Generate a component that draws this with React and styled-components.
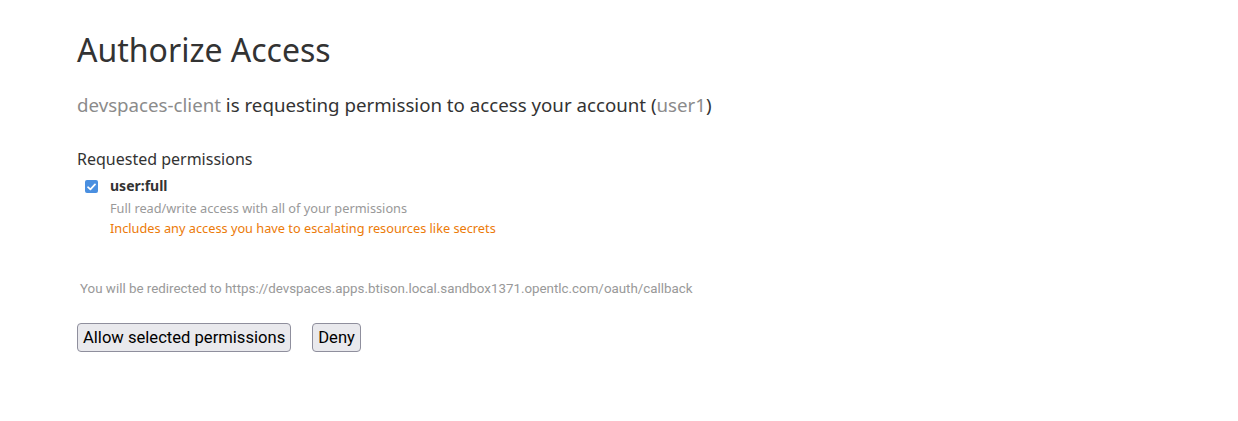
import React, { useState } from "react";
import styled, { createGlobalStyle } from "styled-components";

const GlobalStyle = createGlobalStyle`
body {
  margin: 0;
  background: #fff;
  font-family: "Noto Sans", "Open Sans", sans-serif;
  color: #333;
}
`;

const Page = styled.div`
  padding: 28px 77px;
  display: flex;
  flex-direction: column;
`;

const Title = styled.h1`
  margin: 0;
  font-size: 32px;
  font-weight: 400;
  line-height: 44px;
  color: #333;
`;

const Lead = styled.p`
  margin: 20px 0 0;
  font-size: 18.7px;
  line-height: 26px;
  color: #333;
`;

const Muted = styled.span`
  color: #8b8b8b;
`;

const SectionTitle = styled.h4`
  margin: 30px 0 0;
  font-size: 16px;
  font-weight: 400;
  line-height: 22px;
  color: #333;
`;

const Permission = styled.label`
  display: grid;
  grid-template-columns: 25px 1fr;
  padding-left: 8px;
  margin-top: 6px;
  cursor: pointer;
`;

const Box = styled.span`
  width: 13px;
  height: 13px;
  margin-top: 4px;
  border-radius: 2px;
  background: ${(p) => (p.$checked ? "#4a8fe0" : "#fff")};
  border: ${(p) => (p.$checked ? "none" : "1px solid #8f8f9d")};
  display: flex;
  align-items: center;
  justify-content: center;
`;

const Scope = styled.div`
  font-size: 14px;
  font-weight: 700;
  line-height: 20px;
  color: #333;
`;

const Detail = styled.div`
  font-size: 12.75px;
  line-height: 20px;
  color: ${(p) => p.$color || "#999"};
  margin-top: ${(p) => p.$top || 0}px;
`;

const Redirect = styled.p`
  margin: 42px 0 0 3px;
  font-family: Roboto, "Noto Sans", sans-serif;
  font-size: 13.35px;
  line-height: 18px;
  color: #999;
`;

const Actions = styled.div`
  display: flex;
  gap: 21px;
  margin-top: 25px;
`;

const Button = styled.button`
  font-family: Roboto, sans-serif;
  font-size: 16.6px;
  line-height: 20px;
  color: #000;
  background: #e9e9ed;
  border: 1px solid #8f8f9d;
  border-radius: 4px;
  padding: 3px 5px;
  height: 29px;
  cursor: pointer;
  &:hover {
    background: #d0d0d7;
  }
`;

export default function App() {
  const [checked, setChecked] = useState(true);
  return (
    <>
      <GlobalStyle />
      <Page>
        <Title>Authorize Access</Title>
        <Lead>
          <Muted>devspaces-client</Muted> is requesting permission to access your account (
          <Muted>user1</Muted>)
        </Lead>
        <SectionTitle>Requested permissions</SectionTitle>
        <Permission onClick={() => setChecked(!checked)}>
          <Box $checked={checked}>
            {checked && (
              <svg width="9" height="8" viewBox="0 0 9 8">
                <path d="M1 4.2 L3.4 6.4 L8 1.4" fill="none" stroke="#fff" strokeWidth="1.7" strokeLinecap="round" strokeLinejoin="round" />
              </svg>
            )}
          </Box>
          <div>
            <Scope>user:full</Scope>
            <Detail $top={2}>Full read/write access with all of your permissions</Detail>
            <Detail $color="#ec7a08">Includes any access you have to escalating resources like secrets</Detail>
          </div>
        </Permission>
        <Redirect>You will be redirected to https://devspaces.apps.btison.local.sandbox1371.opentlc.com/oauth/callback</Redirect>
        <Actions>
          <Button>Allow selected permissions</Button>
          <Button>Deny</Button>
        </Actions>
      </Page>
    </>
  );
}
